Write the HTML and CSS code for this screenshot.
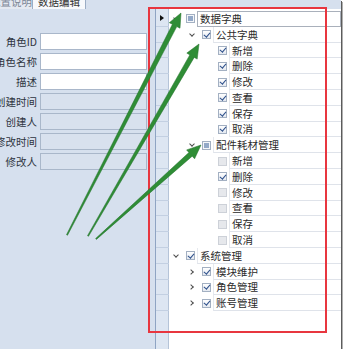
FILE: index.html
```html
<!DOCTYPE html>
<html lang="zh">
<head>
  <meta charset="UTF-8">
  <title>数据编辑</title>
  <link rel="stylesheet" href="styles.css">
</head>
<body>
  <div class="window">
    <div class="tabs">
      <div class="tab tab-off"><span>权限配置说明</span></div>
      <div class="tab tab-on"><span>数据编辑</span></div>
    </div>
    <div class="main">
      <div class="form">
        <div class="field"><label>角色ID</label><div class="box"></div></div>
        <div class="field"><label>角色名称</label><div class="box"></div></div>
        <div class="field"><label>描述</label><div class="box"></div></div>
        <div class="field"><label>创建时间</label><div class="box off"></div></div>
        <div class="field"><label>创建人</label><div class="box off"></div></div>
        <div class="field"><label>修改时间</label><div class="box off"></div></div>
        <div class="field"><label>修改人</label><div class="box off"></div></div>
      </div>
      <div class="tree">
        <div class="row l0"><div class="ind"><i class="tri"></i></div><div class="exp"><i class="chev down"></i></div><div class="cbw"><i class="cb mix"></i></div><div class="cell focus">数据字典</div></div>
        <div class="row l1"><div class="ind"></div><div class="exp"><i class="chev down"></i></div><div class="cbw"><i class="cb on"></i></div><div class="cell">公共字典</div></div>
        <div class="row l2"><div class="ind"></div><div class="exp"></div><div class="cbw"><i class="cb on"></i></div><div class="cell">新增</div></div>
        <div class="row l2"><div class="ind"></div><div class="exp"></div><div class="cbw"><i class="cb on"></i></div><div class="cell">删除</div></div>
        <div class="row l2"><div class="ind"></div><div class="exp"></div><div class="cbw"><i class="cb on"></i></div><div class="cell">修改</div></div>
        <div class="row l2"><div class="ind"></div><div class="exp"></div><div class="cbw"><i class="cb on"></i></div><div class="cell">查看</div></div>
        <div class="row l2"><div class="ind"></div><div class="exp"></div><div class="cbw"><i class="cb on"></i></div><div class="cell">保存</div></div>
        <div class="row l2"><div class="ind"></div><div class="exp"></div><div class="cbw"><i class="cb on"></i></div><div class="cell">取消</div></div>
        <div class="row l1"><div class="ind"></div><div class="exp"><i class="chev down"></i></div><div class="cbw"><i class="cb mix"></i></div><div class="cell">配件耗材管理</div></div>
        <div class="row l2"><div class="ind"></div><div class="exp"></div><div class="cbw"><i class="cb"></i></div><div class="cell">新增</div></div>
        <div class="row l2"><div class="ind"></div><div class="exp"></div><div class="cbw"><i class="cb on"></i></div><div class="cell">删除</div></div>
        <div class="row l2"><div class="ind"></div><div class="exp"></div><div class="cbw"><i class="cb"></i></div><div class="cell">修改</div></div>
        <div class="row l2"><div class="ind"></div><div class="exp"></div><div class="cbw"><i class="cb"></i></div><div class="cell">查看</div></div>
        <div class="row l2"><div class="ind"></div><div class="exp"></div><div class="cbw"><i class="cb"></i></div><div class="cell">保存</div></div>
        <div class="row l2"><div class="ind"></div><div class="exp"></div><div class="cbw"><i class="cb"></i></div><div class="cell">取消</div></div>
        <div class="row l0"><div class="ind"></div><div class="exp"><i class="chev down"></i></div><div class="cbw"><i class="cb on"></i></div><div class="cell">系统管理</div></div>
        <div class="row l1"><div class="ind"></div><div class="exp"><i class="chev right"></i></div><div class="cbw"><i class="cb on"></i></div><div class="cell">模块维护</div></div>
        <div class="row l1"><div class="ind"></div><div class="exp"><i class="chev right"></i></div><div class="cbw"><i class="cb on"></i></div><div class="cell">角色管理</div></div>
        <div class="row l1"><div class="ind"></div><div class="exp"><i class="chev right"></i></div><div class="cbw"><i class="cb on"></i></div><div class="cell">账号管理</div></div>
      </div>
    </div>
  </div>

  <!-- annotation marks drawn over the screenshot -->
  <svg class="marks" width="344" height="354" viewBox="0 0 344 354">
    <rect x="149" y="8" width="177" height="324" fill="none" stroke="#e8363f" stroke-width="2"/>
    <g fill="#2f8d36" stroke="#22702a" stroke-width="0.5" stroke-linejoin="round">
      <polygon points="67.5,235.3 176.8,26.6 180,28.2 181,13 169.3,22.7 172.4,24.3 66.5,234.7"/>
      <polygon points="88.5,236.3 194.2,57.4 197.2,59.1 199,44 186.8,53.1 189.8,54.9 87.5,235.7"/>
      <polygon points="96.4,239.4 192.2,156.2 194.6,158.8 201,145 186.6,149.9 188.9,152.5 95.6,238.6"/>
    </g>
  </svg>
</body>
</html>
```

FILE: styles.css
```css
* { box-sizing: border-box; }
body { margin: 0; position: relative; background: #fff; font-family: "Noto Sans CJK SC", "Noto Sans", sans-serif; font-size: 10.5px; color: #2a2a2a; }

.window { width: 341px; height: 349px; background: #d6e0ee; box-shadow: 1px 1px 0 #5c5c5c, 2px 2px 0 #b0b0b0; display: flex; flex-direction: column; overflow: hidden; }

.tabs { height: 9px; flex: none; display: flex; overflow: hidden; }
.tab { height: 9px; display: flex; justify-content: center; white-space: nowrap; overflow: hidden; }
.tab span { display: block; line-height: 12px; margin-top: -4px; }
.tab-off { width: 32px; justify-content: flex-end; background: #e4e9f1; color: #7d8796; }
.tab-on { width: 54px; background: #f7f9fc; border-left: 1px solid #9badc5; border-right: 1px solid #9badc5; color: #333; }

.main { flex: 1; display: flex; min-height: 0; }

.form { width: 155px; flex: none; padding-top: 24px; display: flex; flex-direction: column; gap: 3px; }
.field { height: 17px; display: flex; align-items: center; gap: 3px; }
.field label { width: 37px; flex: none; display: flex; justify-content: flex-end; white-space: nowrap; color: #2e3440; }
.box { width: 107px; height: 17px; border: 1px solid #a9b7ca; background: #fff; }
.box.off { background: #d8e1ee; }

.tree { flex: 1; padding-top: 2px; border-left: 1px solid #8fa4c3; background: linear-gradient(to right, #dde6f2 0 12px, #b5c4d8 12px 13px, #fff 13px); }
.row { height: 15.8px; display: flex; }
.ind { width: 13px; flex: none; border-bottom: 1px solid #c3d0e2; display: flex; align-items: center; justify-content: center; padding-right: 1px; }
.tri { width: 0; height: 0; border-left: 4px solid #111; border-top: 3.5px solid transparent; border-bottom: 3.5px solid transparent; }
.exp { width: 14px; flex: none; display: flex; align-items: center; justify-content: center; }
.l1 .exp { margin-left: 16px; }
.l2 .exp { margin-left: 32px; }
.chev { width: 4px; height: 4px; border-right: 1.3px solid #4c4c4c; border-bottom: 1.3px solid #4c4c4c; }
.chev.down { transform: rotate(45deg); margin-top: -2px; }
.chev.right { transform: rotate(-45deg); margin-left: -2px; }
.cbw { width: 14px; flex: none; display: flex; align-items: center; justify-content: center; }
.cb { position: relative; width: 9px; height: 9px; border: 1px solid #cdd1d8; background: #e6e8ec; }
.cb.on { border-color: #a3b0c2; background: linear-gradient(#fff, #e4e9f0); }
.cb.on::after { content: ""; position: absolute; left: 2px; top: -0.5px; width: 2.5px; height: 5px; border: solid #2d4f8a; border-width: 0 1.5px 1.5px 0; transform: rotate(40deg); }
.cb.mix { border-color: #a3b0c2; background: #f4f6f9; }
.cb.mix::after { content: ""; position: absolute; left: 1px; top: 1px; width: 5px; height: 5px; background: #93a9c8; }
.cell { flex: 1; padding-left: 2px; border-left: 1px solid #e6e9ee; border-bottom: 1px solid #dfe3ea; display: flex; align-items: center; white-space: nowrap; }
.cell.focus { border: 1px solid #a9b0bb; }

.marks { position: absolute; left: 0; top: 0; pointer-events: none; }
```
